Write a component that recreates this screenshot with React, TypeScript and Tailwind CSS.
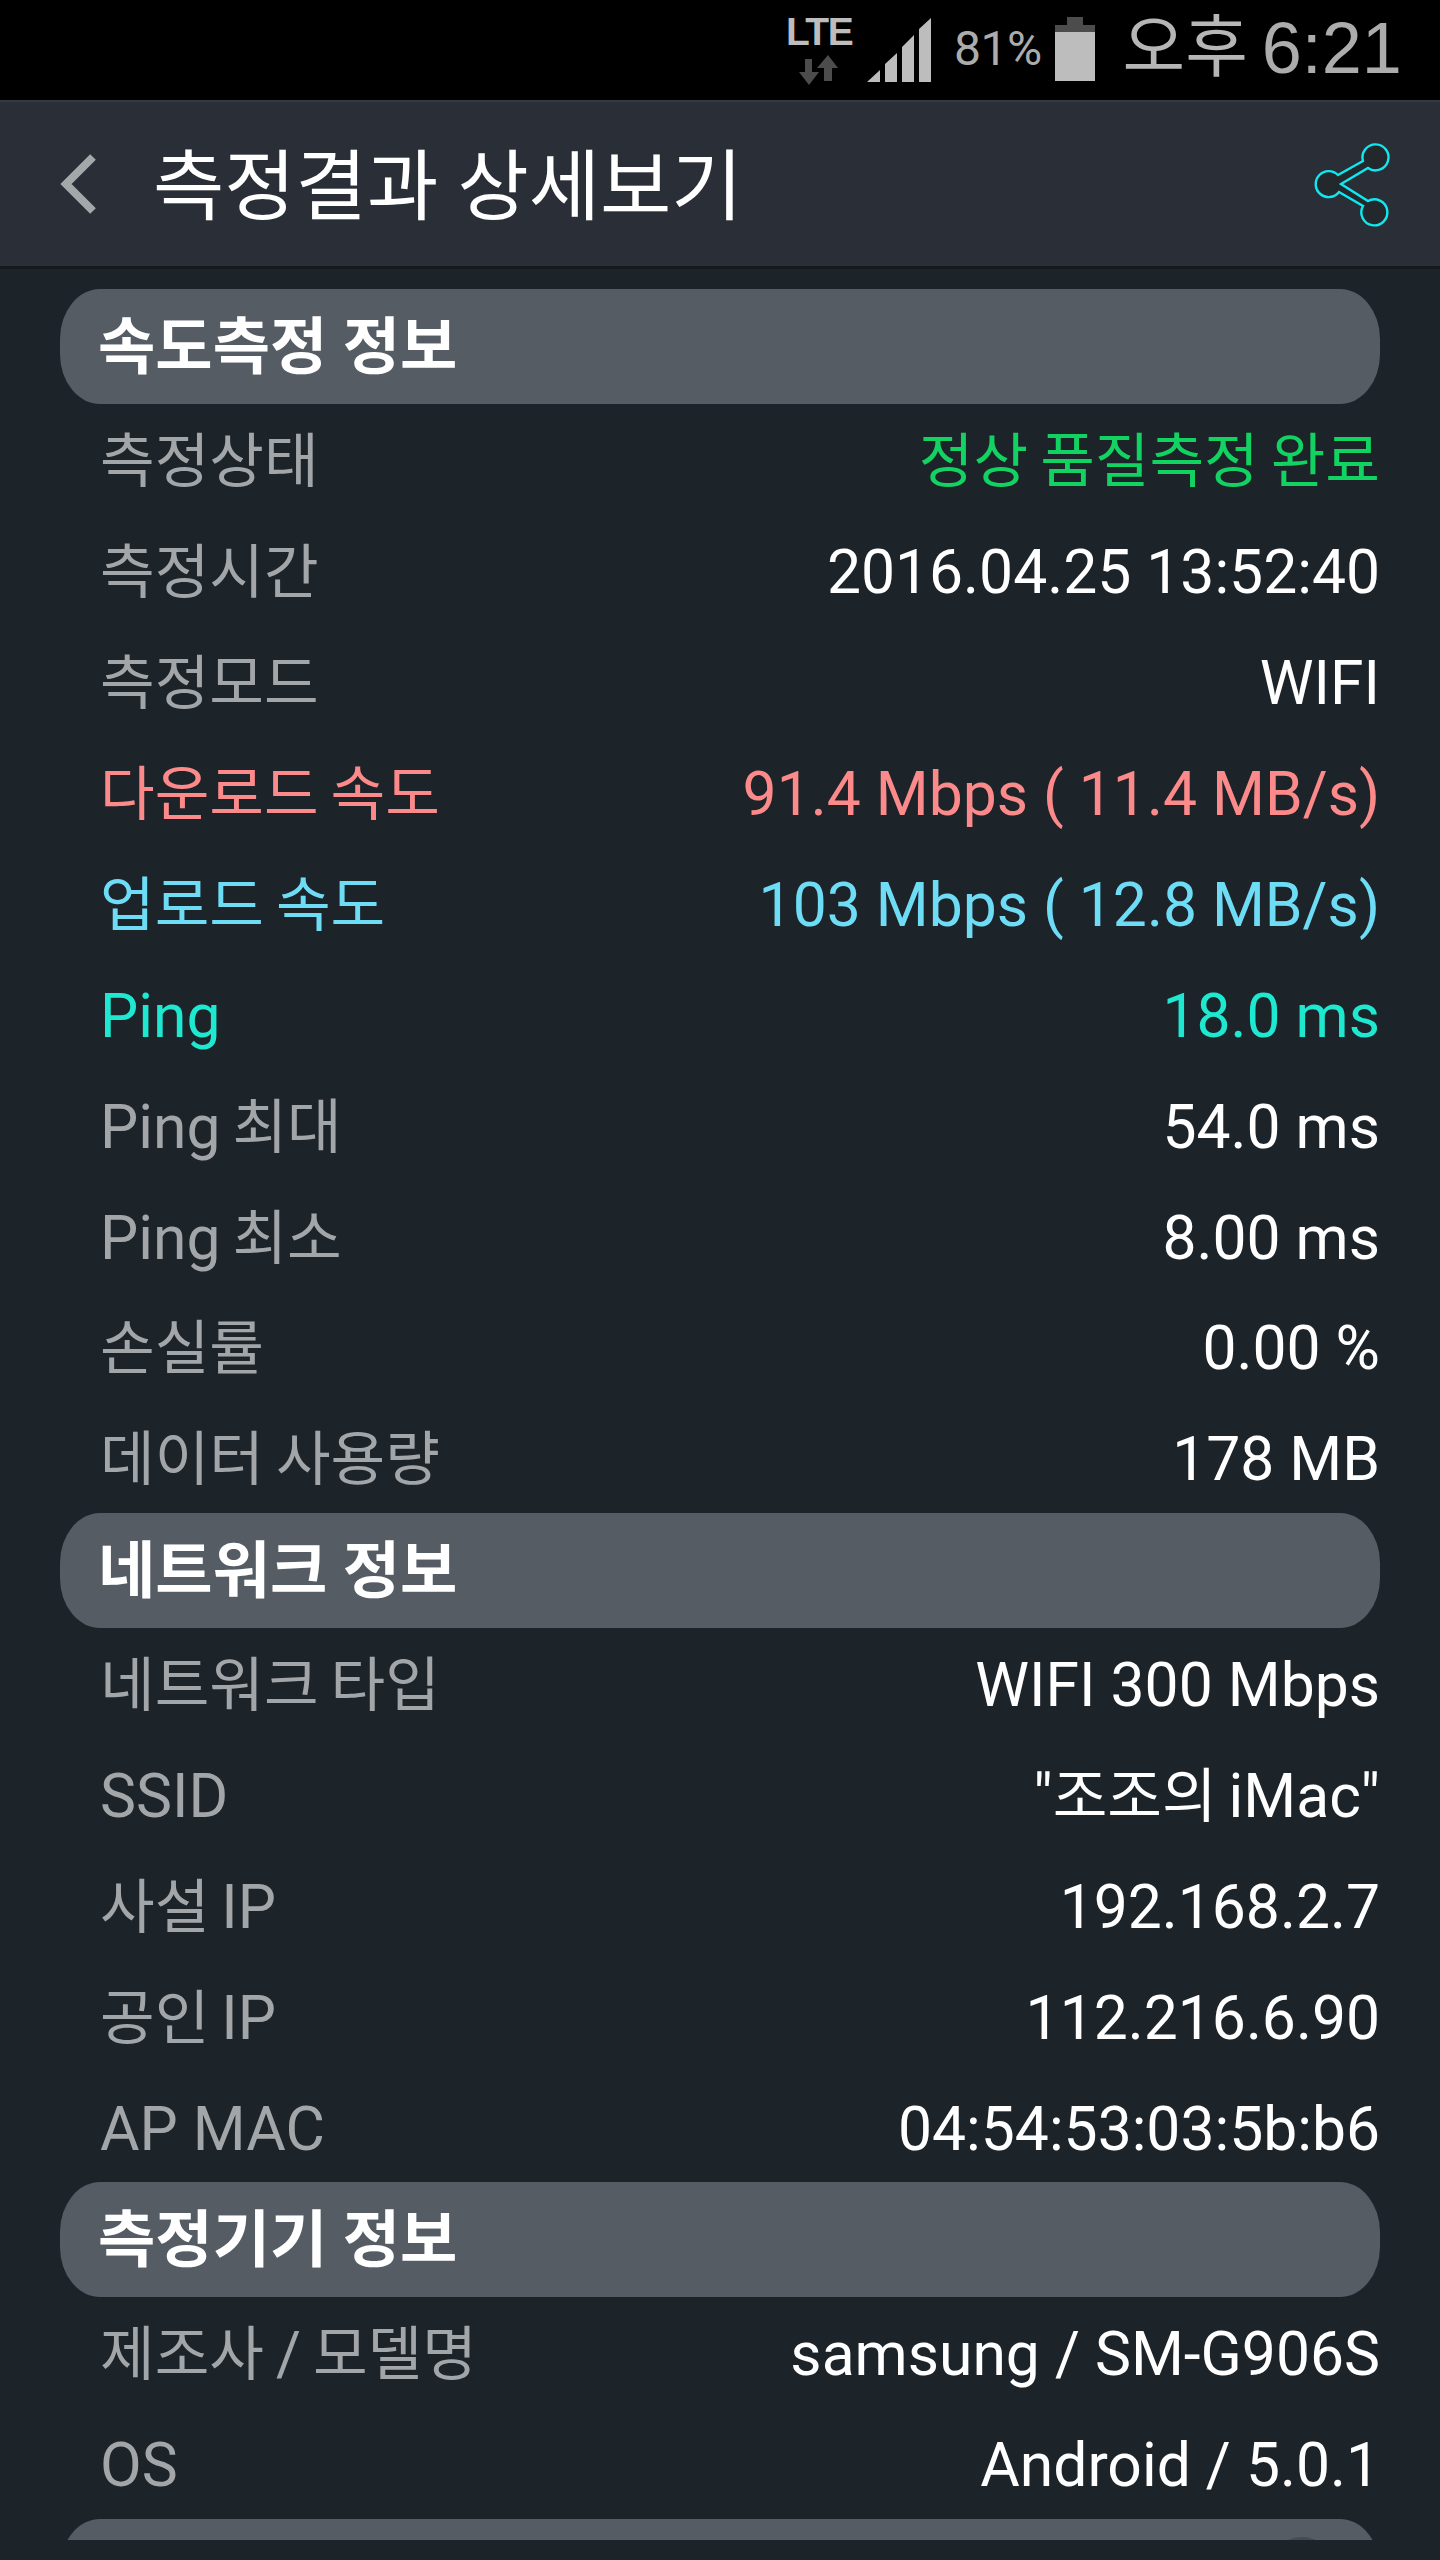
const FONT = "font-['Roboto','Noto_Sans_CJK_KR',sans-serif]";

type Row = { label: string; value: string; labelClass?: string; valueClass?: string };

const speedRows: Row[] = [
  { label: "측정상태", value: "정상 품질측정 완료", valueClass: "text-[#12d262]" },
  { label: "측정시간", value: "2016.04.25 13:52:40" },
  { label: "측정모드", value: "WIFI" },
  { label: "다운로드 속도", value: "91.4 Mbps ( 11.4 MB/s)", labelClass: "text-[#fd8a8a]", valueClass: "text-[#fd8a8a]" },
  { label: "업로드 속도", value: "103 Mbps ( 12.8 MB/s)", labelClass: "text-[#6fdcf6]", valueClass: "text-[#6fdcf6]" },
  { label: "Ping", value: "18.0 ms", labelClass: "text-[#1fe8d0]", valueClass: "text-[#1fe8d0]" },
  { label: "Ping 최대", value: "54.0 ms" },
  { label: "Ping 최소", value: "8.00 ms" },
  { label: "손실률", value: "0.00 %" },
  { label: "데이터 사용량", value: "178 MB" },
];

const networkRows: Row[] = [
  { label: "네트워크 타입", value: "WIFI 300 Mbps" },
  { label: "SSID", value: '"조조의 iMac"' },
  { label: "사설 IP", value: "192.168.2.7" },
  { label: "공인 IP", value: "112.216.6.90" },
  { label: "AP MAC", value: "04:54:53:03:5b:b6" },
];

const deviceRows: Row[] = [
  { label: "제조사 / 모델명", value: "samsung / SM-G906S" },
  { label: "OS", value: "Android / 5.0.1" },
];

// hangul runs a bit smaller than the latin ones, and their spaces tighter
function Mixed({ text }: { text: string }) {
  const hasHangul = /[가-힣]/.test(text);
  return (
    <span className={hasHangul ? "[word-spacing:-3px]" : ""}>
      {text.split(/([가-힣]+)/).map((part, i) =>
        /[가-힣]/.test(part) ? (
          <span key={i} className="text-[59.4px]">{part}</span>
        ) : (
          part
        ),
      )}
    </span>
  );
}

function StatusBar() {
  return (
    <div className="h-[100px] bg-black flex items-start text-[#acacac]">
      <div className="ml-[787px] mt-[18px] w-[64px] flex flex-col items-center">
        <span className="h-[28px] text-[39px] leading-[28px] font-bold tracking-[-1.5px] text-[#bdbdbd] font-['Liberation_Sans',sans-serif]">LTE</span>
        <svg width="40" height="32" viewBox="0 0 40 32" className="mt-[9px]">
          <path d="M6 4h7v13h7L10 30 0 17h6z" fill="#4c4c4c" />
          <path d="M25 26h8V13h6L29 0 18 13h7z" fill="#4c4c4c" />
        </svg>
      </div>
      <svg width="64" height="64" viewBox="0 0 64 64" className="ml-[16px] mt-[18px]">
        <path d="M0 64 13 52V64z M18 46 30 35V64H18z M35 29 47 17V64H35z M52 11 64 0V64H52z" fill="#bdbdbd" />
      </svg>
      <span className="ml-[23px] mt-[21px] text-[48px] leading-[56px] tracking-[-0.5px]">81%</span>
      <svg width="40" height="64" viewBox="0 0 40 64" className="ml-[13px] mt-[17px]">
        <path d="M12 0h16v8h12v7H0V8h12z" fill="#4c4c4c" />
        <path d="M0 15h40v49H0z" fill="#bdbdbd" />
      </svg>
      <span className="ml-[28px] mt-[8px] text-[68px] leading-[80px] text-[#b6b6b6] whitespace-nowrap">오후</span>
      <span className="ml-[14px] mt-[8px] text-[72px] leading-[80px] whitespace-nowrap font-['Liberation_Sans',sans-serif]">6:21</span>
    </div>
  );
}

function Header() {
  return (
    <div className="h-[169px] bg-[#2a2f37] border-t-2 border-t-[#353a42] border-b-[3px] border-b-[#14191d] flex items-center">
      <svg width="36" height="60" viewBox="0 0 36 60" className="ml-[60px]">
        <path d="M33 3 6 30l27 27" fill="none" stroke="#a3a8ab" strokeWidth="8" />
      </svg>
      <h1 className="ml-[57px] pt-[8px] text-[77.5px] leading-none font-normal text-white">측정결과 상세보기</h1>
      <svg width="100" height="100" viewBox="0 0 100 100" className="ml-auto mr-[40px] mt-[2px]">
        <path
          d="M38 40 63 26A13 13 0 1 1 68 33L41 49 68 66A13 13 0 1 1 63 71L39 57A13 13 0 1 1 38 40Z"
          fill="#23282d"
          stroke="#10e8f0"
          strokeWidth="2.4"
        />
      </svg>
    </div>
  );
}

function SectionTitle({ title }: { title: string }) {
  return (
    <div className="h-[115px] bg-[#555c64] rounded-[40px/50px] mx-[60px] pl-[38px] pt-[3px] flex items-center text-[62.3px] font-bold text-white">
      {title}
    </div>
  );
}

function InfoRow({ label, value, labelClass = "text-[#a3a6a9]", valueClass = "text-white" }: Row) {
  return (
    <div className="h-[110.87px] ml-[100px] mr-[60px] pt-[7px] flex items-center justify-between text-[60.6px] whitespace-nowrap">
      <span className={labelClass}>
        <Mixed text={label} />
      </span>
      <span className={valueClass}>
        <Mixed text={value} />
      </span>
    </div>
  );
}

function Section({ title, rows }: { title: string; rows: Row[] }) {
  return (
    <div>
      <SectionTitle title={title} />
      {rows.map((r) => (
        <InfoRow key={r.label} {...r} />
      ))}
    </div>
  );
}

export default function App() {
  return (
    <div className={`w-[1440px] h-[2560px] bg-[#1c2329] overflow-hidden ${FONT}`}>
      <StatusBar />
      <Header />
      <div className="h-[2251px] mt-[20px] overflow-hidden">
        <Section title="속도측정 정보" rows={speedRows} />
        <Section title="네트워크 정보" rows={networkRows} />
        <Section title="측정기기 정보" rows={deviceRows} />
        <div className="relative h-[115px] bg-[#555c64] rounded-[40px/50px] mx-[60px]">
          <div className="absolute top-[18px] right-[46px] w-[64px] h-[64px] rounded-full bg-[#454b52]" />
        </div>
      </div>
    </div>
  );
}
